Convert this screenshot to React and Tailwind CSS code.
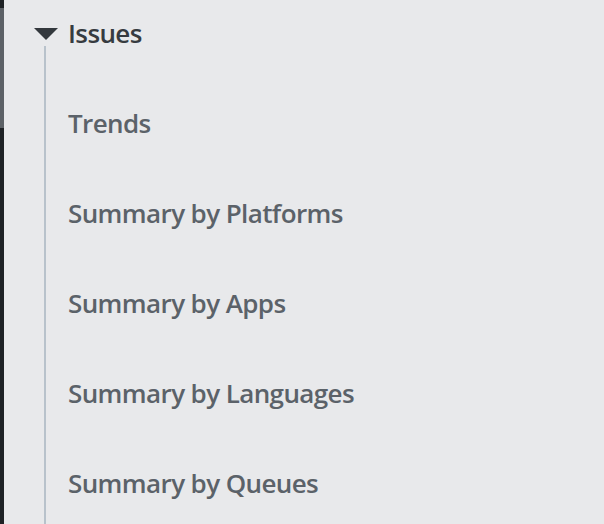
export default function App() {
  const items = ['Trends', 'Summary by Platforms', 'Summary by Apps', 'Summary by Languages', 'Summary by Queues'];

  return (
    <div className="flex h-[524px] w-[604px] overflow-hidden bg-[#e8e9eb] font-['Open_Sans',sans-serif]">
      <div className="flex w-[4px] shrink-0 flex-col bg-[#1e2225]">
        <div className="mt-[8px] h-[120px] bg-[#5c6166]" />
      </div>
      <div className="relative flex-1 pl-[64px]">
        <div className="absolute left-[40px] top-[46px] bottom-0 w-[2px] bg-[#b8c2cb]" />
        <div className="flex h-[66px] items-center">
          <svg className="absolute left-[30px] top-[28px]" width="24" height="12" viewBox="0 0 24 12">
            <path d="M0 0 L24 0 L12 12 Z" fill="#33383d" />
          </svg>
          <span className="text-[26px] font-semibold tracking-[-0.6px] text-[#363b40]">Issues</span>
        </div>
        <ul className="mt-[12px]">
          {items.map((t) => (
            <li key={t} className="flex h-[90px] items-center text-[26px] font-semibold tracking-[-0.6px] text-[#5b6269]">
              {t}
            </li>
          ))}
        </ul>
      </div>
    </div>
  );
}
